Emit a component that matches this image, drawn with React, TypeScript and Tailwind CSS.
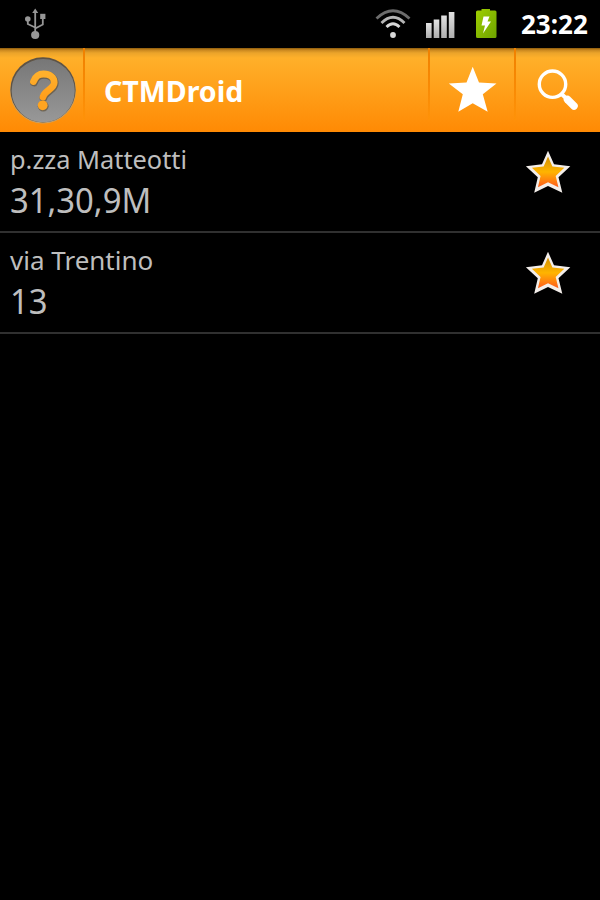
const STAR = "M24 1.700L30 15.200L46.300 17.200L34.500 28.300L38.300 43.700L24 37L10.200 43.700L13.800 28.300L1.900 17.200L18 15.200Z";
const QUESTION = "M24.500 25.500C27 19.500 30 18 34.500 18C41 18 45.200 21.500 45.200 26.500C45.200 33 35.500 34.500 34 41";

const stops = [
    { name: "p.zza Matteotti", lines: "31,30,9M", nameScale: "scale-x-[0.975]" },
    { name: "via Trentino", lines: "13", nameScale: "scale-x-100" },
];

const StatusBar = () => (
    <div className="flex h-12 items-center bg-black">
        <svg className="ml-6 h-8 w-6 shrink-0" viewBox="0 0 24 32" fill="none" stroke="#969696" strokeWidth="1.8">
            <path d="M11.2 4V27M11.2 20.500L18.800 16.500V10M11.2 19.500L3.800 16V11" />
            <path d="M11.2 0.400L14.200 5H8.200Z" fill="#969696" stroke="none" />
            <rect x="16.2" y="5.8" width="5.2" height="5.2" fill="#969696" stroke="none" />
            <circle cx="3.8" cy="11" r="2.8" fill="#969696" stroke="none" />
            <circle cx="11.2" cy="27" r="4.1" fill="#969696" stroke="none" />
        </svg>
        <svg className="ml-[327px] h-8 w-9 shrink-0" viewBox="0 0 36 32" fill="none" strokeWidth="2.8">
            <path d="M1.500 10.500Q18 -5 34.500 10.500" stroke="#6c6c6c" />
            <path d="M6.500 15Q18 3.500 29.500 15" stroke="#b5b5b5" />
            <path d="M11.500 19Q18 12.500 24.500 19" stroke="#d8d8d8" />
            <circle cx="18" cy="27" r="2.9" fill="#d8d8d8" />
        </svg>
        <svg className="ml-[14px] h-8 w-8 shrink-0" viewBox="0 0 32 32">
            <defs>
                <linearGradient id="bars" x2="0" y2="1">
                    <stop stopColor="#e2e2e2" />
                    <stop offset="1" stopColor="#aeaeae" />
                </linearGradient>
            </defs>
            <g fill="url(#bars)">
                <rect x="1" y="15" width="5.600" height="15" />
                <rect x="8.700" y="11.500" width="5.600" height="18.500" />
                <rect x="16.200" y="7.500" width="5.600" height="22.500" />
                <rect x="23.800" y="4" width="5.600" height="26" />
            </g>
        </svg>
        <svg className="ml-[17px] h-8 w-6 shrink-0" viewBox="0 0 24 32">
            <defs>
                <linearGradient id="cell" x2="1" y2="1">
                    <stop stopColor="#a0cf00" />
                    <stop offset="1" stopColor="#6da300" />
                </linearGradient>
            </defs>
            <path d="M7.500 1H16V2.500H21Q22.500 2.500 22.500 4V28.500Q22.500 30 21 30H3.500Q2 30 2 28.500V4Q2 2.500 3.500 2.500H7.500Z" fill="url(#cell)" />
            <path d="M9.500 8.500H15.500L13.500 13.500H17L9 25.500L11 17.500H7.500Z" fill="#fff" />
        </svg>
        <span className="ml-[23px] text-[26px] leading-[46px] font-bold whitespace-nowrap text-white">23:22</span>
    </div>
);

const Divider = () => <div className="h-[72px] w-0.5 shrink-0 self-start bg-linear-to-b from-[#f08000] to-[#ff9208]" />;

const ActionBar = () => (
    <div className="flex h-[84px] items-center bg-[linear-gradient(#8b5a0c_0px,#c9871f_2px,#eba42a_5px,#ffb02a_10px,#ff8a04_84px)]">
        <div className="flex w-[83px] shrink-0 justify-center pl-[3px]">
            <svg className="h-[68px] w-[68px] shrink-0" viewBox="0 0 68 68">
                <defs>
                    <linearGradient id="disc" x2="0" y2="1">
                        <stop stopColor="#777" />
                        <stop offset="1" stopColor="#989898" />
                    </linearGradient>
                    <linearGradient id="mark" x2="0" y2="1">
                        <stop stopColor="#ffb02c" />
                        <stop offset="1" stopColor="#ff9f1c" />
                    </linearGradient>
                </defs>
                <circle cx="34" cy="34.500" r="33" fill="#c9a064" />
                <circle cx="34" cy="33.800" r="32.600" fill="#5e5344" />
                <circle cx="34.200" cy="34.700" r="31.600" fill="url(#disc)" />
                <g transform="translate(0.500 0.900)" opacity="0.6">
                    <path d={QUESTION} fill="none" stroke="#5a4a30" strokeWidth="7.800" strokeLinecap="round" />
                    <circle cx="33.700" cy="49.300" r="5.400" fill="#5a4a30" />
                </g>
                <path d={QUESTION} fill="none" stroke="url(#mark)" strokeWidth="6.800" strokeLinecap="round" />
                <circle cx="33.700" cy="49.300" r="4.900" fill="#ffa420" />
            </svg>
        </div>
        <Divider />
        <div className="min-w-0 flex-1 pt-px pl-[19px]">
            <h1 className="w-max origin-left scale-x-[0.985] text-[29px] leading-10 font-bold text-white">CTMDroid</h1>
        </div>
        <Divider />
        <button className="flex w-[84px] shrink-0 justify-center">
            <svg className="h-12 w-12 overflow-visible" viewBox="0 0 48 48">
                <path d="M24.700 0.800L31 16.500L48.500 17.600L34.800 28.200L39.700 45.800L24.700 37.200L10.300 45.800L14.800 28.200L0.800 17.600L18.500 16.500Z" fill="#fff" />
            </svg>
        </button>
        <Divider />
        <button className="flex w-[84px] shrink-0 justify-center">
            <svg className="h-12 w-12" viewBox="0 0 48 48" fill="none" stroke="#fff">
                <circle cx="18.500" cy="18.200" r="13.200" strokeWidth="3.400" />
                <path d="M27.500 28L33 33" strokeWidth="4" />
                <path d="M33.500 33.500L40 40" strokeWidth="7.500" strokeLinecap="round" />
            </svg>
        </button>
    </div>
);

const FavoriteStar = () => (
    <svg className="h-12 w-12 shrink-0" viewBox="0 0 48 48">
        <defs>
            <linearGradient id="fav" x2="0" y2="1">
                <stop offset="0.1" stopColor="#dc9800" />
                <stop offset="0.5" stopColor="#ffb400" />
                <stop offset="0.95" stopColor="#ff6418" />
            </linearGradient>
        </defs>
        <path d={STAR} fill="#f3eeea" />
        <path d={STAR} fill="url(#fav)" transform="translate(6.500 6.300) scale(0.73)" />
    </svg>
);

export default function App() {
    return (
        <div className="h-[900px] w-[600px] overflow-hidden bg-black font-['Noto_Sans',sans-serif]">
            <StatusBar />
            <ActionBar />
            <ul>
                {stops.map((stop) => (
                    <li key={stop.name} className="flex h-[101px] justify-between border-b-2 border-[#303030] pr-7 pl-2.5 text-[#bebebe]">
                        <div className="pt-[7px]">
                            <div className={`w-max origin-left text-[26px] leading-10 ${stop.nameScale}`}>{stop.name}</div>
                            <div className="w-max origin-left scale-x-[0.965] text-[34px] leading-[43px]">{stop.lines}</div>
                        </div>
                        <div className="pt-[17px]">
                            <FavoriteStar />
                        </div>
                    </li>
                ))}
            </ul>
        </div>
    );
}
